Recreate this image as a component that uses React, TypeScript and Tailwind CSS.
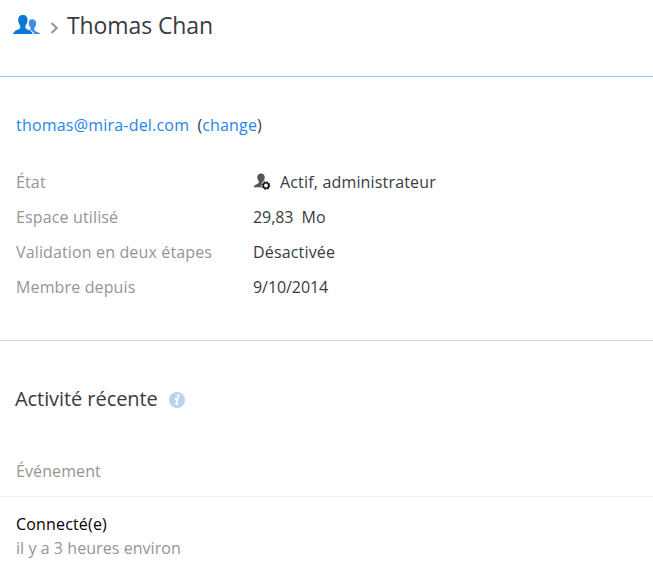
import type { ReactNode } from "react";

interface DetailRowProps {
  label: string;
  children: ReactNode;
}

function PeopleIcon() {
  return (
    <svg width="28" height="20" viewBox="0 0 28 20" className="shrink-0">
      <path
        d="M19 4.200c2.600 0 4.300 1.600 4.100 4.500-.1 2-.9 3.300-1.800 4.300-.3 1.700.1 2.700 1.700 3.400 2.300.8 3.700 1.300 4.300 2.700h-6c-.8-2.200-2.400-3.500-4.700-4.300.9-.7 1.200-1.500.9-2.500-1.100-1.100-1.600-2.300-1.700-4-.1-2.500 1-4.100 3.200-4.100z"
        fill="#3a8ee6"
      />
      <path
        d="M9.800 0c3.200 0 4.900 2 4.700 5.200-.1 2.400-.9 4-2 5.200-.3 2.400.2 3.500 2 4.200 2.900 1.100 4.700 2.100 5.300 4.400H0c.6-2.300 2.400-3.300 5.200-4.400 1.800-.7 2.300-1.800 2-4.200-1.100-1.200-1.900-2.800-2-5.200C5 2 6.600 0 9.800 0z"
        fill="#0b78d8"
      />
    </svg>
  );
}

function AdminIcon() {
  return (
    <svg width="18" height="17" viewBox="0 0 18 17" className="shrink-0">
      <path
        d="M8 .5c2.400 0 3.800 1.500 3.700 3.900-.1 1.700-.7 2.900-1.500 3.800-.2 1.500.1 2.200 1.200 2.700L10 14.200H.600c.2-1.600 1.500-2.500 3.600-3.300 1.500-.6 1.900-1.200 1.600-2.700-.8-.9-1.400-2.100-1.500-3.800C4.200 2 5.600.5 8 .5z"
        fill="#555"
      />
      <circle cx="13" cy="12.500" r="4.500" fill="#fff" />
      <circle cx="13" cy="12.500" r="2.700" fill="none" stroke="#111" strokeWidth="1.600" />
      <circle cx="13" cy="12.500" r="3.800" fill="none" stroke="#111" strokeWidth="1.100" strokeDasharray="1.500 1.484" />
    </svg>
  );
}

function InfoIcon() {
  return (
    <svg width="16" height="16" viewBox="0 0 16 16" className="shrink-0">
      <circle cx="8" cy="8" r="8" fill="#b5d4f3" />
      <circle cx="9.200" cy="3.700" r="1.350" fill="#fff" />
      <path
        d="M5.700 7.200l3-.7-1.300 4.900c-.3 1.100.3 1.200 1.700.3"
        fill="none"
        stroke="#fff"
        strokeWidth="1.800"
      />
    </svg>
  );
}

function DetailRow({ label, children }: DetailRowProps) {
  return (
    <div className="flex h-[35px] items-center">
      <dt className="w-[237px] shrink-0 tracking-[0.14px] text-[#959595]">{label}</dt>
      <dd className="flex items-center whitespace-pre">{children}</dd>
    </div>
  );
}

export default function App() {
  return (
    <div className="h-[566px] w-full overflow-hidden bg-white font-['Open_Sans',sans-serif] text-[16px] leading-6 text-[#383c42]">
      <header className="flex h-[77px] items-start border-b border-[#7ecef9] pl-[13px]">
        <div className="mt-[15px]">
          <PeopleIcon />
        </div>
        <svg width="9" height="12" viewBox="0 0 9 12" className="mt-[22px] ml-[9px] shrink-0">
          <path d="M1.500 1l5.200 5-5.200 5" fill="none" stroke="#999" strokeWidth="2.300" />
        </svg>
        <h1 className="mt-[9px] ml-[8px] text-[23px] leading-8 tracking-[-0.1px]">Thomas Chan</h1>
      </header>

      <section className="h-[264px] border-b border-[#c9dfec] px-4 pt-9">
        <p className="whitespace-pre">
          <a href="#" className="tracking-[0.2px] text-[#2586ec]">thomas@mira-del.com</a>
          {"  ("}
          <a href="#" className="tracking-[0.17px] text-[#2586ec]">change</a>)
        </p>
        <dl className="mt-[27px]">
          <DetailRow label="État">
            <AdminIcon />
            <span className="ml-[9px] tracking-[0.17px]">Actif, administrateur</span>
          </DetailRow>
          <DetailRow label="Espace utilisé">
            <span className="tracking-[-0.07px]">{"29,83  Mo"}</span>
          </DetailRow>
          <DetailRow label="Validation en deux étapes">
            <span className="tracking-[0.17px]">Désactivée</span>
          </DetailRow>
          <DetailRow label="Membre depuis">
            <span className="tracking-[-0.07px]">9/10/2014</span>
          </DetailRow>
        </dl>
      </section>

      <section>
        <div className="flex items-center pt-[43px] pl-[15px]">
          <h2 className="text-[20px] leading-[30px] tracking-[-0.07px]">Activité récente</h2>
          <div className="mt-[1px] ml-[11px]">
            <InfoIcon />
          </div>
        </div>
        <div className="mt-[45px] h-[38px] border-b border-[#e8f2f8] pl-4 tracking-[0.1px] text-[#959595]">Événement</div>
        <div className="px-4 pt-[15px]">
          <div className="tracking-[0.17px] text-black">Connecté(e)</div>
          <div className="tracking-[0.06px] text-[#959595]">il y a 3 heures environ</div>
        </div>
      </section>
    </div>
  );
}
